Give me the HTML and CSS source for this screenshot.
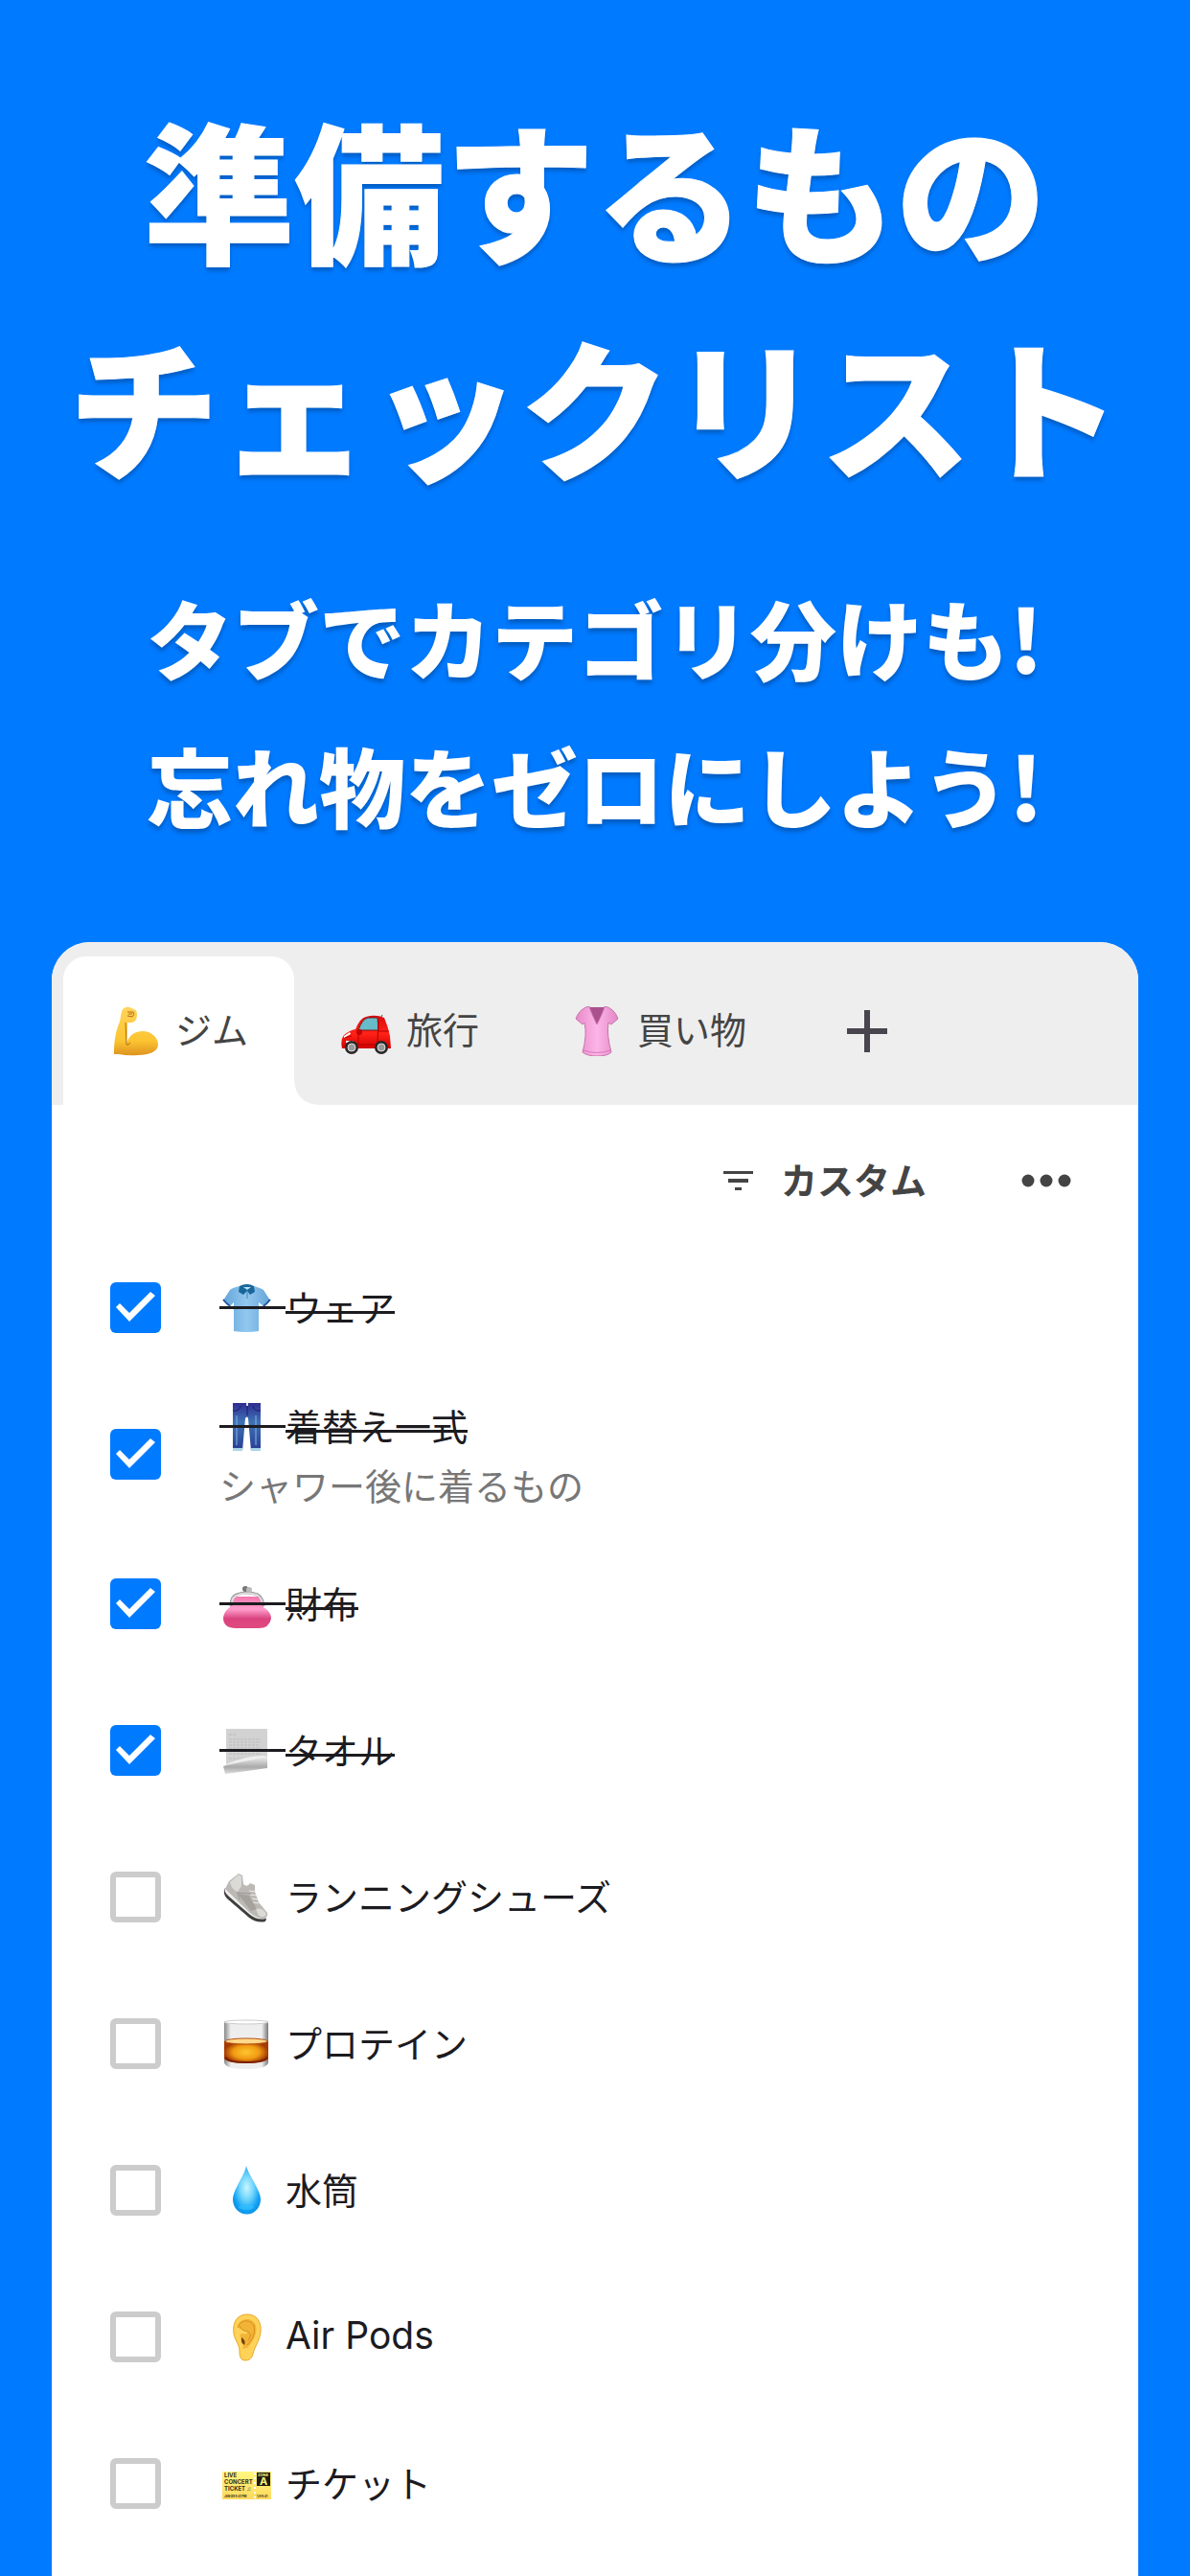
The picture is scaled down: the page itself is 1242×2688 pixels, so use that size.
FILE: index.html
```html
<!DOCTYPE html>
<html lang="ja">
<head>
    <meta charset="UTF-8">
    <meta name="viewport" content="width=device-width, initial-scale=1.0">
    <title>準備するものチェックリスト</title>
    <link rel="stylesheet" href="styles.css">
</head>
<body>
    <header class="hero">
        <h1 class="hero-title">準備するもの<br>チェックリスト</h1>
        <p class="hero-text">タブでカテゴリ分けも!<br>忘れ物をゼロにしよう!</p>
    </header>

    <main class="card">
        <nav class="tabs">
            <button class="tab active">
                <svg class="emoji" viewBox="0 0 52 52" aria-hidden="true">
                    <defs>
                        <linearGradient id="skin" x1="0" y1="0" x2="0" y2="1">
                            <stop offset="0" stop-color="#ffd45c"/>
                            <stop offset="0.7" stop-color="#fcc431"/>
                            <stop offset="1" stop-color="#dd9320"/>
                        </linearGradient>
                    </defs>
                    <path fill="url(#skin)" d="M4 49C4 39 5 27 10 16L12 5Q15 0 20 1L27 4Q29 9 27 14Q24 18 18 17C18 25 18 32 17 39C20 29 27 26 34 26C42 26 50 32 50 40C50 47 41 51 29 51Q19 52 9 50L4 50Z"/>
                    <path fill="none" stroke="#b26d14" stroke-width="1" d="M18 6L24 6Q26 9 23 11L18 10M19 8h4M16 17l1 23Q19 41 21 38"/>
                </svg>
                <span>ジム</span>
            </button>
            <button class="tab">
                <svg class="emoji" viewBox="0 0 52 52" aria-hidden="true">
                    <defs>
                        <linearGradient id="car" x1="0" y1="0" x2="0" y2="1">
                            <stop offset="0" stop-color="#d80c0c"/>
                            <stop offset="0.55" stop-color="#ff2218"/>
                            <stop offset="1" stop-color="#d00000"/>
                        </linearGradient>
                    </defs>
                    <path stroke="#444" stroke-width="1" d="M41 13l2-4"/>
                    <path fill="url(#car)" d="M1 44Q-1 35 3 30Q9 25 15 24Q20 12 26 11Q36 8 45 12Q49 21 51 31L52 44Z"/>
                    <path fill="#66bcc8" stroke="#761d20" stroke-width="1" d="M18 25Q22 13 28 12L38 12L39 25Z"/>
                    <path fill="none" stroke="#b80000" stroke-width="1" d="M18 25V40H38L39 13M3 33l8-2M38 26h12"/>
                    <path fill="#fff" d="M3 31l6-4 1 2-7 4zM5 36h8v2H5z"/>
                    <circle cx="19" cy="27" r="3" fill="#bf0000"/>
                    <circle cx="11" cy="43" r="7" fill="#292929"/>
                    <circle cx="42" cy="43" r="7" fill="#292929"/>
                    <circle cx="11" cy="43" r="4" fill="#999" stroke="#ddd"/>
                    <circle cx="42" cy="43" r="4" fill="#999" stroke="#ddd"/>
                </svg>
                <span>旅行</span>
            </button>
            <button class="tab">
                <svg class="emoji" viewBox="0 0 52 52" aria-hidden="true">
                    <defs>
                        <linearGradient id="blouse" x1="0" y1="0" x2="1" y2="0">
                            <stop offset="0" stop-color="#e88ac9"/>
                            <stop offset="0.5" stop-color="#fdb5e8"/>
                            <stop offset="1" stop-color="#e387c6"/>
                        </linearGradient>
                    </defs>
                    <path fill="#a9508d" d="M18 1h17l-4 18-5 1z"/>
                    <path fill="url(#blouse)" stroke="#c873ab" stroke-width="1" d="M18 0Q8 2 4 13L11 19L13 17Q16 30 11 48Q16 52 26 52Q37 52 41 48Q36 30 38 17L41 19L48 13Q44 2 34 0Q33 5 26 19Q19 5 18 0Z"/>
                    <path fill="none" stroke="#d779b9" stroke-width="1" d="M12 46q14 5 28 0"/>
                </svg>
                <span>買い物</span>
            </button>
            <button class="add-tab" aria-label="タブを追加">
                <svg width="44" height="44" viewBox="0 0 44 44" aria-hidden="true"><path fill="#49454f" d="M19 0h6v19h18v6H25v19h-6V25H1v-6h18z"/></svg>
            </button>
        </nav>

        <div class="toolbar">
            <button class="sort">
                <svg width="32" height="22" viewBox="0 0 32 22" aria-hidden="true"><path fill="#444" d="M0 1h31v3H0zM5 9h21v4H5zM12 18h7v3h-7z"/></svg>
                <span>カスタム</span>
            </button>
            <button class="more" aria-label="メニュー">
                <svg width="52" height="14" viewBox="0 0 52 14" aria-hidden="true"><g fill="#444"><circle cx="7" cy="7" r="6.5"/><circle cx="26" cy="7" r="6.5"/><circle cx="45" cy="7" r="6.5"/></g></svg>
            </button>
        </div>

        <ul class="list">
            <li>
                <label class="item">
                    <input type="checkbox" checked>
                    <span class="item-body">
                        <span class="item-title">
                            <span class="item-icon">
                                <svg class="emoji" viewBox="0 0 52 52" aria-hidden="true">
                                    <defs>
                                        <linearGradient id="polo" x1="0" y1="0" x2="1" y2="0">
                                            <stop offset="0" stop-color="#65a5d9"/>
                                            <stop offset="0.5" stop-color="#91c8ef"/>
                                            <stop offset="1" stop-color="#65a5d9"/>
                                        </linearGradient>
                                    </defs>
                                    <path fill="url(#polo)" d="M18 3Q10 5 8 7L1 18Q4 22 8 24L12 20V50Q26 52 38 50V20L43 24Q47 22 50 18L43 7Q40 5 33 3Z"/>
                                    <path fill="none" stroke="#2557a0" stroke-width="2" d="M1 17Q4 21 8 24M50 17Q47 21 43 24"/>
                                    <path fill="#18679c" d="M18 3Q26-1 33 3L34 9L29 12L26 8L22 12L17 9Z"/>
                                    <path fill="#b9e1f7" d="M22 4h8l-4 3z"/>
                                    <path fill="none" stroke="#4587b7" stroke-width="1" d="M26 9v7"/>
                                </svg>
                            </span>
                            <span class="item-name">ウェア</span>
                        </span>
                    </span>
                </label>
            </li>
            <li>
                <label class="item">
                    <input type="checkbox" checked>
                    <span class="item-body">
                        <span class="item-title">
                            <span class="item-icon">
                                <svg class="emoji" viewBox="0 0 52 52" aria-hidden="true">
                                    <defs>
                                        <linearGradient id="jeans" x1="0" y1="0" x2="0" y2="1">
                                            <stop offset="0" stop-color="#2f2d91"/>
                                            <stop offset="0.4" stop-color="#3e72b5"/>
                                            <stop offset="1" stop-color="#283c93"/>
                                        </linearGradient>
                                    </defs>
                                    <path fill="url(#jeans)" d="M11 1H40V51H30L27 17Q26 14 24 17L21 51H11Z"/>
                                    <path fill="#a9d6e8" d="M11 48h10v3H11zM30 48h10v3H30z"/>
                                    <path fill="none" stroke="#201b64" stroke-width="1" d="M11 9q7 1 8-5M40 9q-7 1-8-5M26 3v11"/>
                                    <path stroke="#77a8da" stroke-width="2" d="M15 14v31M35 14v31" opacity=".6"/>
                                    <path fill="#ddd" d="M25 1h2v3h-2z"/>
                                </svg>
                            </span>
                            <span class="item-name">着替え一式</span>
                        </span>
                        <span class="item-note">シャワー後に着るもの</span>
                    </span>
                </label>
            </li>
            <li>
                <label class="item">
                    <input type="checkbox" checked>
                    <span class="item-body">
                        <span class="item-title">
                            <span class="item-icon">
                                <svg class="emoji" viewBox="0 0 52 52" aria-hidden="true">
                                    <defs>
                                        <linearGradient id="purse" x1="0" y1="0" x2="0" y2="1">
                                            <stop offset="0" stop-color="#f577ad"/>
                                            <stop offset="0.4" stop-color="#ff9dcc"/>
                                            <stop offset="0.7" stop-color="#da437f"/>
                                            <stop offset="1" stop-color="#e0497f"/>
                                        </linearGradient>
                                    </defs>
                                    <path fill="url(#purse)" d="M11 18L40 18L43 29Q51 34 51 41Q49 51 38 51H14Q1 51 1 40Q2 33 8 29Z"/>
                                    <path fill="none" stroke="#999" stroke-width="3" d="M9 28Q9 18 15 16Q26 12 37 16Q42 19 43 28"/>
                                    <path fill="none" stroke="#ddd" stroke-width="2" d="M10 25Q10 18 17 16Q26 13 36 16Q41 19 42 26"/>
                                    <circle cx="24" cy="10" r="3" fill="#777"/>
                                    <circle cx="28" cy="11" r="3" fill="#bbb"/>
                                </svg>
                            </span>
                            <span class="item-name">財布</span>
                        </span>
                    </span>
                </label>
            </li>
            <li>
                <label class="item">
                    <input type="checkbox" checked>
                    <span class="item-body">
                        <span class="item-title">
                            <span class="item-icon">
                                <svg class="emoji" viewBox="0 0 52 52" aria-hidden="true">
                                    <defs>
                                        <linearGradient id="roll" x1="0" y1="0" x2="0" y2="1">
                                            <stop offset="0" stop-color="#eee"/>
                                            <stop offset="0.6" stop-color="#aaa"/>
                                            <stop offset="1" stop-color="#ddd"/>
                                        </linearGradient>
                                    </defs>
                                    <path fill="#d2d2d2" d="M4 3h43v32L4 42z"/>
                                    <path stroke="#bbb" stroke-width="1" stroke-dasharray="3 1" d="M7 9h8M7 14h33M7 17h33M7 20h31M7 23h33M7 26h32M7 29h33M7 34h18"/>
                                    <path fill="url(#roll)" d="M1 42Q18 36 47 32V44L3 50Z"/>
                                    <path fill="#eee" d="M4 40Q24 31 43 31L47 32L4 41z"/>
                                </svg>
                            </span>
                            <span class="item-name">タオル</span>
                        </span>
                    </span>
                </label>
            </li>
            <li>
                <label class="item">
                    <input type="checkbox">
                    <span class="item-body">
                        <span class="item-title">
                            <span class="item-icon">
                                <svg class="emoji" viewBox="0 0 52 52" aria-hidden="true">
                                    <path fill="#3e3e3e" d="M2 18Q1 24 6 28L28 47Q36 53 45 51L46 48L3 16Z"/>
                                    <path fill="#eee" d="M3 16Q1 20 7 25L29 44Q37 50 45 48L47 44Z"/>
                                    <path fill="#bcb9b4" d="M3 17L7 9L17 1L21 3L22 12Q26 16 29 11L34 13V20L38 31L47 42Q48 46 44 48Q36 48 29 42Z"/>
                                    <path fill="#dcdad7" d="M8 10L17 2L20 4L20 14L16 20Q10 18 8 10ZM35 38q8-2 11 6-3 4-8 1z"/>
                                    <path fill="#a5a19c" d="M16 22L28 24L36 38L30 40Z"/>
                                    <path stroke="#eee" stroke-width="1" d="M28 19l7 1M29 23l7 1M31 27l6 1M32 31l6 1"/>
                                    <path fill="none" stroke="#999" stroke-width="1" d="M15 21L30 22M16 21L18 28"/>
                                </svg>
                            </span>
                            <span class="item-name">ランニングシューズ</span>
                        </span>
                    </span>
                </label>
            </li>
            <li>
                <label class="item">
                    <input type="checkbox">
                    <span class="item-body">
                        <span class="item-title">
                            <span class="item-icon">
                                <svg class="emoji" viewBox="0 0 52 52" aria-hidden="true">
                                    <defs>
                                        <linearGradient id="glass" x1="0" y1="0" x2="1" y2="0">
                                            <stop offset="0" stop-color="#888"/>
                                            <stop offset="0.15" stop-color="#eee"/>
                                            <stop offset="0.85" stop-color="#eee"/>
                                            <stop offset="1" stop-color="#777"/>
                                        </linearGradient>
                                        <radialGradient id="whisky">
                                            <stop offset="0" stop-color="#ffc730"/>
                                            <stop offset="0.6" stop-color="#f09a12"/>
                                            <stop offset="1" stop-color="#a43a04"/>
                                        </radialGradient>
                                    </defs>
                                    <path fill="url(#glass)" d="M2 2H48V45Q47 52 25 52Q3 52 2 45Z"/>
                                    <path fill="url(#whisky)" d="M2 23H48V41Q45 46 25 46Q5 46 2 41Z"/>
                                    <ellipse cx="25" cy="23" rx="22" ry="3" fill="#ffd98c" stroke="#b65112"/>
                                    <path fill="none" stroke="#762003" stroke-width="2" d="M3 40Q7 45 25 45Q43 45 47 40"/>
                                    <ellipse cx="25" cy="3" rx="23" ry="2" fill="#fff" stroke="#ccc"/>
                                </svg>
                            </span>
                            <span class="item-name">プロテイン</span>
                        </span>
                    </span>
                </label>
            </li>
            <li>
                <label class="item">
                    <input type="checkbox">
                    <span class="item-body">
                        <span class="item-title">
                            <span class="item-icon">
                                <svg class="emoji" viewBox="0 0 52 52" aria-hidden="true">
                                    <defs>
                                        <radialGradient id="drop" cx="0.5" cy="0.45" r="0.6">
                                            <stop offset="0" stop-color="#c9f6ff"/>
                                            <stop offset="0.4" stop-color="#74d6fc"/>
                                            <stop offset="0.8" stop-color="#10a1f4"/>
                                            <stop offset="1" stop-color="#0e8ede"/>
                                        </radialGradient>
                                    </defs>
                                    <path fill="url(#drop)" d="M25 0C27 9 40 25 40 35A14 15 0 0 1 11 35C11 25 24 9 25 0Z"/>
                                    <ellipse cx="25" cy="43" rx="8" ry="3" fill="#31bfff" opacity=".7"/>
                                </svg>
                            </span>
                            <span class="item-name">水筒</span>
                        </span>
                    </span>
                </label>
            </li>
            <li>
                <label class="item">
                    <input type="checkbox">
                    <span class="item-body">
                        <span class="item-title">
                            <span class="item-icon">
                                <svg class="emoji" viewBox="0 0 52 52" aria-hidden="true">
                                    <path fill="#ffd258" stroke="#e8a727" stroke-width="1" d="M12 22C10 9 17 2 26 2C36 2 41 10 40 20C39 30 34 35 32 43C31 48 28 50 24 50C19 50 18 46 18 40C18 33 13 29 12 22Z"/>
                                    <path fill="#f2b437" d="M16 14C19 5 31 5 35 13C37 23 32 30 26 37L21 38Q24 31 19 26Q17 22 22 22Q25 24 27 20Q17 18 16 14Z"/>
                                    <path fill="none" stroke="#d98e1b" stroke-width="1" d="M16 16C18 8 29 6 33 14C35 22 31 29 26 34M18 14Q20 19 27 20Q32 23 27 29"/>
                                    <path fill="#75410a" d="M20 26Q25 29 23 34Q19 32 20 26Z"/>
                                </svg>
                            </span>
                            <span class="item-name latin">Air Pods</span>
                        </span>
                    </span>
                </label>
            </li>
            <li>
                <label class="item">
                    <input type="checkbox">
                    <span class="item-body">
                        <span class="item-title">
                            <span class="item-icon">
                                <svg class="emoji" viewBox="0 0 52 52" aria-hidden="true">
                                    <defs>
                                        <linearGradient id="ticket" x1="0" y1="0" x2="0" y2="1">
                                            <stop offset="0" stop-color="#fff780"/>
                                            <stop offset="1" stop-color="#ffd95c"/>
                                        </linearGradient>
                                    </defs>
                                    <path fill="url(#ticket)" d="M0 13h51v29H0z"/>
                                    <path fill="#1c1b10" d="M36 14h14v14H36z"/>
                                    <path stroke="#fff" stroke-width="2" stroke-dasharray="2 3" d="M34 14v28"/>
                                    <g font-family="Inter, sans-serif" font-weight="700" fill="#33301a">
                                        <text x="2" y="19" font-size="6">LIVE</text>
                                        <text x="2" y="26" font-size="6">CONCERT</text>
                                        <text x="2" y="33" font-size="6">TICKET ♫</text>
                                        <text x="2" y="40" font-size="3">JAN 09 9:41 PM</text>
                                        <text x="36" y="40" font-size="3">1/9 9:41</text>
                                        <text x="37" y="18" font-size="4" fill="#fff780">ZONE</text>
                                        <text x="39" y="27" font-size="11" fill="#fff780">A</text>
                                    </g>
                                </svg>
                            </span>
                            <span class="item-name">チケット</span>
                        </span>
                    </span>
                </label>
            </li>
        </ul>
    </main>
</body>
</html>
```
FILE: styles.css
```css
/* General Styles */
* {
    box-sizing: border-box;
}

body {
    display: flex;
    flex-direction: column;
    min-height: 100vh;
    margin: 0;
    background-color: #007aff;
    color: #1c1b1f;
    font-family: 'Noto Sans CJK JP', sans-serif;
    font-size: 38px;
}

button {
    display: flex;
    align-items: center;
    padding: 0;
    border: none;
    background: none;
    color: #444;
    font: inherit;
    cursor: pointer;
}

button span {
    padding-bottom: 6px;
}

svg {
    display: block;
    flex: none;
}

/* Hero */
.hero {
    padding: 82px 0 88px;
    color: #fff;
    font-weight: 900;
    text-align: center;
    text-shadow: 0 4px 4px rgba(0, 0, 0, 0.25);
}

.hero-title {
    margin: 0 0 53px;
    font-size: 157px;
    font-weight: 900;
    line-height: 226px;
    -webkit-text-stroke: 1px #fff;
}

.hero-text {
    margin: 0;
    font-size: 90px;
    line-height: 154px;
}

/* Card */
.card {
    flex: 1;
    margin: 0 54px;
    border-radius: 40px 40px 0 0;
    background-color: #fff;
    overflow: hidden;
}

.tabs {
    display: flex;
    padding: 15px 12px 0;
    background-color: #eee;
}

.tab {
    gap: 16px;
    height: 155px;
    padding: 0 48px 0 49px;
}

.tab.active {
    position: relative;
    border-radius: 24px 24px 0 0;
    background-color: #fff;
}

.tab.active::after {
    content: '';
    position: absolute;
    left: 100%;
    bottom: 0;
    width: 24px;
    height: 24px;
    background: radial-gradient(circle at 100% 0, transparent 23px, #fff 24px);
}

.add-tab {
    padding: 0 56px;
}

.emoji {
    width: 52px;
    height: 52px;
}

.toolbar {
    display: flex;
    justify-content: flex-end;
    gap: 99px;
    padding: 49px 70px 26px 0;
}

.sort {
    gap: 28px;
    height: 60px;
    font-weight: 700;
}

/* Checklist */
.list {
    margin: 0;
    padding: 0;
    list-style: none;
}

.item {
    display: flex;
    align-items: center;
    gap: 61px;
    min-height: 152px;
    padding: 0 61px;
    cursor: pointer;
}

.item input {
    appearance: none;
    flex: none;
    align-self: flex-start;
    width: 53px;
    height: 53px;
    margin: 50px 0;
    border: 6px solid #ccc;
    border-radius: 6px;
    background-color: #fff;
}

.item input:checked {
    border: none;
    background-color: #007aff;
}

.item input:checked::after {
    content: '';
    display: block;
    width: 53px;
    height: 53px;
    background-color: #fff;
    clip-path: polygon(6px 26px, 10px 22px, 20px 32px, 42px 10px, 47px 14px, 20px 41px);
}

.item-body {
    display: flex;
    flex-direction: column;
    padding: 18px 0;
    line-height: 60px;
}

.item-title {
    display: flex;
    align-items: center;
}

.item-icon {
    position: relative;
    padding: 0 14px 0 3px;
}

.item-name {
    position: relative;
    padding-bottom: 4px;
    line-height: 56px;
}

.item-note {
    color: #777;
}

.latin {
    font-family: Inter, 'Noto Sans CJK JP', sans-serif;
    font-size: 39px;
}

/* the strike runs across the emoji too, a little higher than on the text */
input:checked ~ .item-body .item-icon::after,
input:checked ~ .item-body .item-name::after {
    content: '';
    position: absolute;
    top: 33px;
    left: 0;
    width: 100%;
    height: 3px;
    background-color: #1c1b1f;
}

input:checked ~ .item-body .item-icon::after {
    top: 24px;
}
```
